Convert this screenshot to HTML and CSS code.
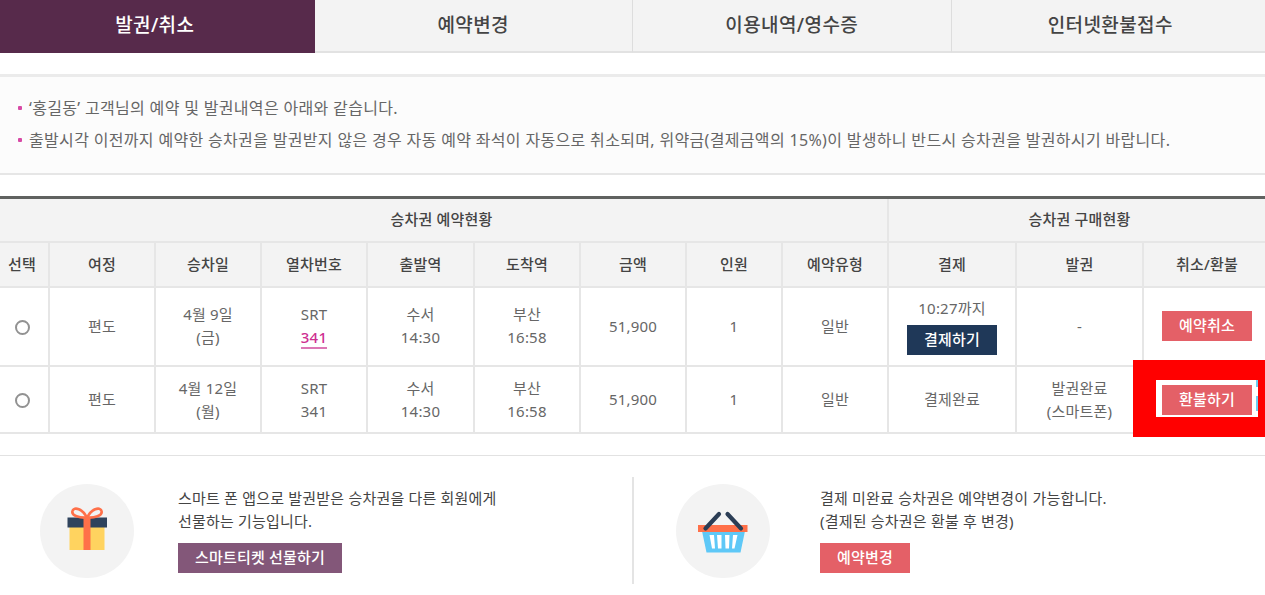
FILE: index.html
```html
<!DOCTYPE html>
<html lang="ko">
<head>
    <meta charset="UTF-8">
    <title>발권/취소</title>
    <meta name="viewport" content="width=device-width, initial-scale=1.0">
    <link rel="stylesheet" href="styles.css">
</head>
<body>
    <div class="wrap">
        <nav class="tabs">
            <a class="tab active">발권/취소</a>
            <a class="tab">예약변경</a>
            <a class="tab">이용내역/영수증</a>
            <a class="tab">인터넷환불접수</a>
        </nav>

        <ul class="notice">
            <li>‘홍길동’ 고객님의 예약 및 발권내역은 아래와 같습니다.</li>
            <li>출발시각 이전까지 예약한 승차권을 발권받지 않은 경우 자동 예약 좌석이 자동으로 취소되며, 위약금(결제금액의 15%)이 발생하니 반드시 승차권을 발권하시기 바랍니다.</li>
        </ul>

        <table class="tickets">
            <colgroup>
                <col class="c-select"><col class="c-a"><col class="c-a"><col class="c-a"><col class="c-b"><col class="c-a"><col class="c-a">
                <col class="c-c"><col class="c-a"><col class="c-d"><col class="c-e"><col>
            </colgroup>
            <thead>
                <tr class="group">
                    <th colspan="9">승차권 예약현황</th>
                    <th colspan="3">승차권 구매현황</th>
                </tr>
                <tr class="head">
                    <th>선택</th>
                    <th>여정</th>
                    <th>승차일</th>
                    <th>열차번호</th>
                    <th>출발역</th>
                    <th>도착역</th>
                    <th>금액</th>
                    <th>인원</th>
                    <th>예약유형</th>
                    <th>결제</th>
                    <th>발권</th>
                    <th>취소/환불</th>
                </tr>
            </thead>
            <tbody>
                <tr class="row-first">
                    <td><span class="radio"></span></td>
                    <td>편도</td>
                    <td>4월 9일<br>(금)</td>
                    <td>SRT<br><a class="train">341</a></td>
                    <td>수서<br>14:30</td>
                    <td>부산<br>16:58</td>
                    <td>51,900</td>
                    <td>1</td>
                    <td>일반</td>
                    <td><div class="until">10:27까지</div><a class="btn navy">결제하기</a></td>
                    <td>-</td>
                    <td><a class="btn red">예약취소</a></td>
                </tr>
                <tr class="row-second">
                    <td><span class="radio"></span></td>
                    <td>편도</td>
                    <td>4월 12일<br>(월)</td>
                    <td>SRT<br>341</td>
                    <td>수서<br>14:30</td>
                    <td>부산<br>16:58</td>
                    <td>51,900</td>
                    <td>1</td>
                    <td>일반</td>
                    <td>결제완료</td>
                    <td>발권완료<br>(스마트폰)</td>
                    <td class="refund"><a class="btn red">환불하기</a><div class="mark"></div></td>
                </tr>
            </tbody>
        </table>

        <div class="guide">
            <div class="guide-item">
                <div class="circle">
                    <svg width="94" height="94" viewBox="0 0 94 94">
                        <rect x="29.500" y="43" width="35" height="23" fill="#ffd35f"/>
                        <rect x="27.500" y="33.500" width="39.500" height="10" fill="#2f435c"/>
                        <rect x="43.500" y="33" width="7" height="33" fill="#ff7049"/>
                        <path d="M47 34C43 25 34 22 32.500 27C31 32 40 34 47 33.500M47 34C51 25 60 22 61.500 27C63 32 54 34 47 33.500" fill="none" stroke="#ff7049" stroke-width="2.600"/>
                    </svg>
                </div>
                <div class="guide-text">
                    <p>스마트 폰 앱으로 발권받은 승차권을 다른 회원에게<br>선물하는 기능입니다.</p>
                    <a class="btn purple">스마트티켓 선물하기</a>
                </div>
            </div>
            <div class="guide-item second">
                <div class="circle">
                    <svg width="94" height="94" viewBox="0 0 94 94">
                        <path d="M26 47H69L64.500 68.500H30.500Z" fill="#5ec8f7"/>
                        <path d="M33.500 51H38L39 64.500H36ZM41 51H45.500V64.500H42ZM49 51H53.500L53 64.500H49.500ZM57 51H61.500L58.500 64.500H56Z" fill="#fff"/>
                        <rect x="22" y="41" width="49.500" height="7" fill="#ff7049"/>
                        <path d="M29.500 44.500L43 30M65 44.500L51.500 30" stroke="#2b3d55" stroke-width="4.200" stroke-linecap="round"/>
                    </svg>
                </div>
                <div class="guide-text">
                    <p>결제 미완료 승차권은 예약변경이 가능합니다.<br>(결제된 승차권은 환불 후 변경)</p>
                    <a class="btn red">예약변경</a>
                </div>
            </div>
        </div>
    </div>
</body>
</html>
```
FILE: styles.css
```css
body {
    margin: 0;
    height: 595px;
    overflow: hidden;
    background: #fff;
    color: #666;
    font-family: "Noto Sans", "Noto Sans CJK KR", sans-serif;
    font-size: 15px;
    letter-spacing: 0.2px;
}
.wrap {
    width: 1274px;
    margin-left: -4px;
}
.tabs {
    display: flex;
    height: 53px;
}
.tab {
    flex: 1;
    box-sizing: border-box;
    border-right: 1px solid #ddd;
    border-bottom: 2px solid #e2e2e2;
    background: #f3f3f3;
    color: #444;
    font-size: 19px;
    font-weight: 500;
    letter-spacing: 0.4px;
    line-height: 51px;
    text-align: center;
}
.tab.active {
    border-color: #572a4b;
    background: #572a4b;
    color: #fff;
}
.notice {
    box-sizing: border-box;
    height: 101px;
    margin: 21px 0 0;
    padding: 15px 0 0 22px;
    border-top: 3px solid #ebebeb;
    border-bottom: 2px solid #e6e6e6;
    background: #fcfcfc;
    font-size: 16px;
    letter-spacing: 0.33px;
    line-height: 30px;
    list-style: none;
}
.notice li {
    display: flex;
    align-items: center;
    gap: 7px;
    height: 32px;
    white-space: nowrap;
}
.notice li::before {
    content: "";
    width: 4px;
    height: 4px;
    border-radius: 1px;
    background: #d84aa6;
}
.tickets {
    width: 1274px;
    margin-top: 21px;
    border-top: 3px solid #606260;
    border-collapse: separate;
    border-spacing: 0;
    table-layout: fixed;
}
.c-select { width: 52px; }
.c-a { width: 106px; }
.c-b { width: 107px; }
.c-c { width: 96px; }
.c-d { width: 128px; }
.c-e { width: 127px; }
.tickets th,
.tickets td {
    box-sizing: border-box;
    padding: 0;
    border-left: 2px solid #e6e6e6;
    border-bottom: 2px solid #e6e6e6;
    text-align: center;
    line-height: 23px;
}
.tickets th:first-child,
.tickets td:first-child {
    border-left: 0;
}
.tickets th {
    background: #f3f3f3;
    color: #444;
    font-weight: 500;
}
.tickets .group th {
    height: 44px;
    padding-bottom: 2px;
}
.head th { height: 45px; }
.tickets .row-first td {
    height: 79px;
    padding-bottom: 1px;
}
.row-second td { height: 67px; }
.radio {
    display: inline-block;
    width: 11px;
    height: 11px;
    border: 2px solid #929292;
    border-radius: 50%;
    vertical-align: middle;
}
.train {
    display: inline-block;
    border-bottom: 2px solid #dc77b5;
    color: #ce2f91;
    font-weight: 500;
    line-height: 20px;
}
.until {
    margin-bottom: 5px;
}
.btn {
    display: block;
    width: 90px;
    height: 30px;
    margin: 0 auto;
    color: #fff;
    font-weight: 500;
    line-height: 29px;
    text-align: center;
}
.navy { background: #1f3858; }
.red { background: #e46067; }
.purple { background: #835779; }
.refund {
    position: relative;
}
/* highlight box round the refund button */
.mark {
    position: absolute;
    top: -7px;
    left: -11px;
    width: 102px;
    height: 37px;
    border: solid #f00;
    border-width: 20px 7px 20px 23px;
}
.mark::after {
    content: "";
    position: absolute;
    top: 0;
    right: 0;
    width: 2px;
    height: 31px;
    background: linear-gradient(#6fcdf2 7px, transparent 7px 16px, #6fcdf2 16px);
}
.guide {
    display: flex;
    margin-top: 21px;
    padding-top: 21px;
    border-top: 1px solid #e2e2e2;
}
.guide-item {
    display: flex;
    box-sizing: border-box;
    width: 636px;
    height: 107px;
    padding: 7px 0 0 44px;
    gap: 44px;
    color: #444;
}
.guide-item.second {
    border-left: 2px solid #e4e4e4;
    padding-left: 42px;
    gap: 50px;
}
.circle {
    width: 94px;
    height: 94px;
    border-radius: 50%;
    background: #f3f3f3;
}
.guide-text p {
    margin: 3px 0 10px;
    line-height: 23px;
}
.guide-text .btn {
    margin: 0;
}
.guide-text .purple {
    width: 164px;
}
```
